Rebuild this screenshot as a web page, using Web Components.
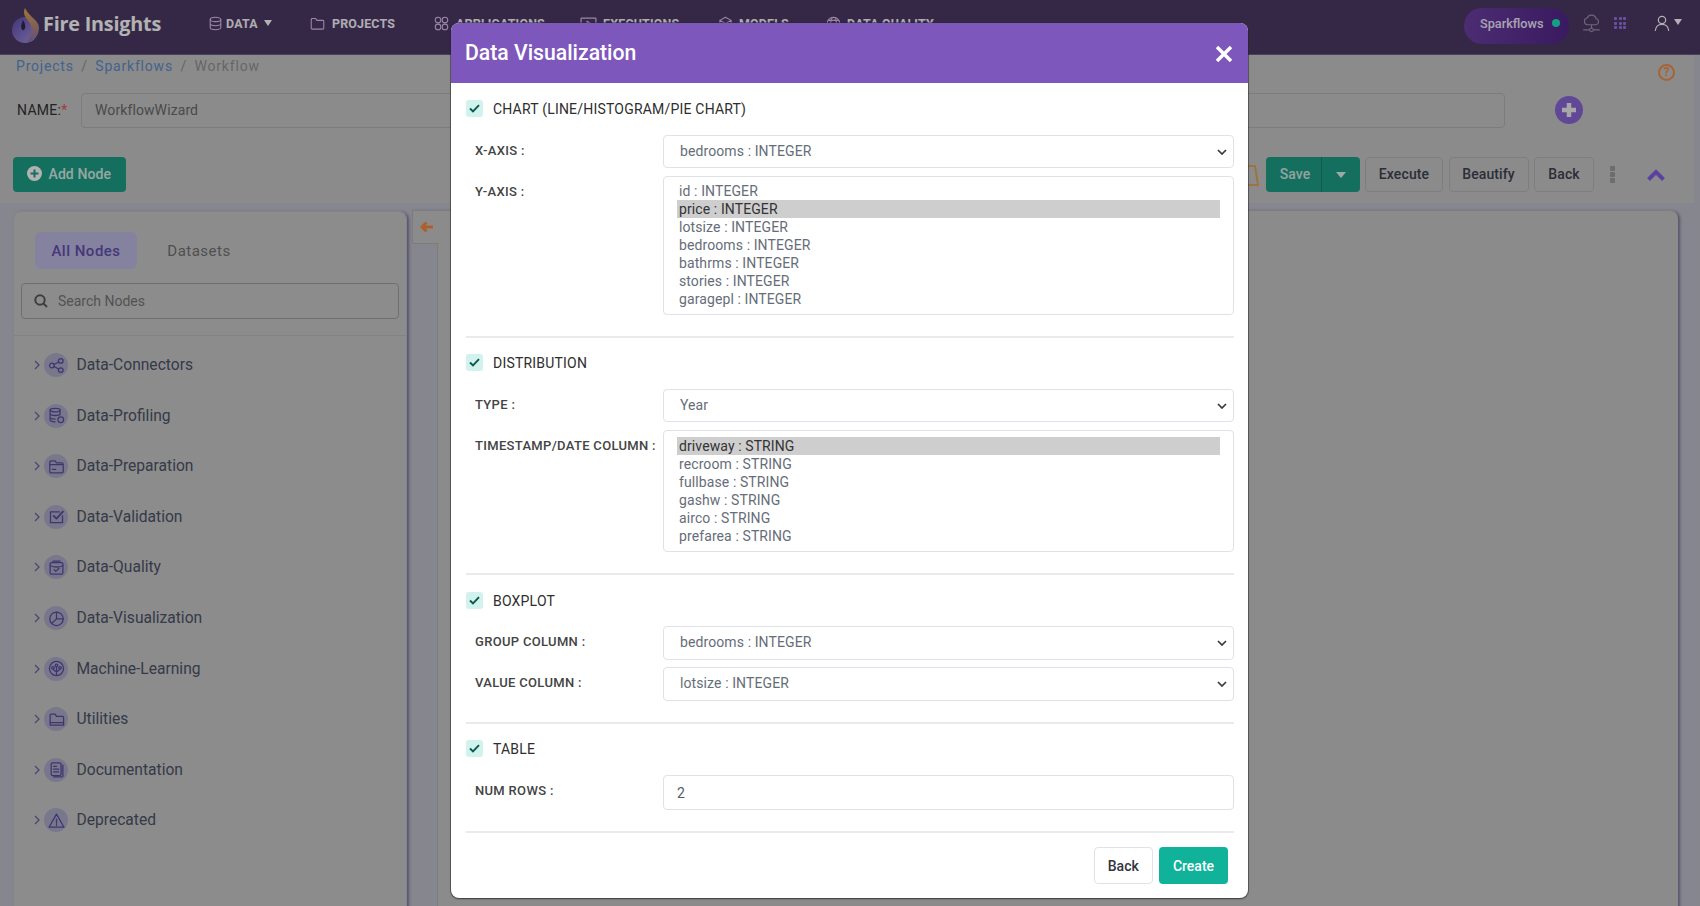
<!DOCTYPE html>
<html lang="en"><head><meta charset="utf-8"><title>Data Visualization</title>
<style>
html,body{margin:0;height:100%;overflow:hidden}
body{font-family:Roboto,"Liberation Sans",sans-serif;font-size:14px;background:#c1c0cc}
</style></head><body>
<fi-app>
  <fi-navbar slot="nav">
    <fi-nav-item w="102" gap="3" icon="db" caret>DATA</fi-nav-item>
    <fi-nav-item w="124" gap="7" icon="folder">PROJECTS</fi-nav-item>
    <fi-nav-item w="146" gap="7" icon="apps">APPLICATIONS</fi-nav-item>
    <fi-nav-item w="138" gap="6" size="17" icon="exec">EXECUTIONS</fi-nav-item>
    <fi-nav-item w="108" gap="6" icon="model">MODELS</fi-nav-item>
    <fi-nav-item w="120" gap="6" icon="globe">DATA QUALITY</fi-nav-item>
  </fi-navbar>
  <fi-workflow-head slot="head"></fi-workflow-head>
  <fi-node-panel slot="panel">
    <fi-node-row icon="share">Data-Connectors</fi-node-row>
    <fi-node-row icon="profile">Data-Profiling</fi-node-row>
    <fi-node-row icon="prep">Data-Preparation</fi-node-row>
    <fi-node-row icon="valid">Data-Validation</fi-node-row>
    <fi-node-row icon="quality">Data-Quality</fi-node-row>
    <fi-node-row icon="pie">Data-Visualization</fi-node-row>
    <fi-node-row icon="ml">Machine-Learning</fi-node-row>
    <fi-node-row icon="util">Utilities</fi-node-row>
    <fi-node-row icon="doc">Documentation</fi-node-row>
    <fi-node-row icon="warn">Deprecated</fi-node-row>
  </fi-node-panel>
  <fi-canvas slot="canvas"></fi-canvas>
  <fi-modal slot="modal" heading="Data Visualization">
    <fi-section label="CHART (LINE/HISTOGRAM/PIE CHART)" first>
      <fi-field label="X-AXIS :"><fi-select>bedrooms : INTEGER</fi-select></fi-field>
      <fi-field label="Y-AXIS :"><fi-listbox selected="1" options="id : INTEGER|price : INTEGER|lotsize : INTEGER|bedrooms : INTEGER|bathrms : INTEGER|stories : INTEGER|garagepl : INTEGER"></fi-listbox></fi-field>
    </fi-section>
    <fi-section label="DISTRIBUTION">
      <fi-field label="TYPE :"><fi-select>Year</fi-select></fi-field>
      <fi-field label="TIMESTAMP/DATE COLUMN :"><fi-listbox style="padding-top:6px" selected="0" options="driveway : STRING|recroom : STRING|fullbase : STRING|gashw : STRING|airco : STRING|prefarea : STRING"></fi-listbox></fi-field>
    </fi-section>
    <fi-section label="BOXPLOT" tight first>
      <fi-field label="GROUP COLUMN :"><fi-select tall>bedrooms : INTEGER</fi-select></fi-field>
      <fi-field label="VALUE COLUMN :"><fi-select tall>lotsize : INTEGER</fi-select></fi-field>
    </fi-section>
    <fi-section label="TABLE">
      <fi-field label="NUM ROWS :"><fi-textbox>2</fi-textbox></fi-field>
    </fi-section>
    <fi-modal-footer></fi-modal-footer>
  </fi-modal>
</fi-app>
<script>
const IC={
db:'<ellipse cx="12" cy="5.5" rx="8.5" ry="3.5"/><path d="M3.5 5.5v13c0 2 3.8 3.5 8.5 3.5s8.500-1.500 8.500-3.500v-13M3.500 12c0 2 3.800 3.500 8.500 3.500s8.500-1.500 8.500-3.500"/>',
folder:'<path d="M2 5.500a1.500 1.500 0 0 1 1.500-1.500H9l2 3h9.500A1.500 1.500 0 0 1 22 8.500v11a1.500 1.500 0 0 1-1.500 1.500h-17A1.500 1.500 0 0 1 2 19.500z"/>',
apps:'<circle cx="6.500" cy="6.500" r="4.500"/><circle cx="17.500" cy="6.500" r="4.500"/><circle cx="6.500" cy="17.500" r="4.500"/><circle cx="17.500" cy="17.500" r="4.500"/>',
exec:'<rect x="1.500" y="3" width="21" height="15" rx="1"/><path d="M10 7.500l5 3-5 3zM7 21.500h10"/>',
model:'<path d="M12 2l9 5v10l-9 5-9-5V7zM3 7l9 5 9-5M12 12v10"/>',
globe:'<circle cx="12" cy="12" r="10"/><ellipse cx="12" cy="12" rx="4.500" ry="10"/><path d="M2 12h20M3.500 7h17M3.500 17h17"/>',
cloud:'<path d="M7 13.500a4.300 4.300 0 0 1-.5-8.500 6 6 0 0 1 11.300 1 3.800 3.800 0 0 1-.3 7.500zM12 13.500V18M2 20h7.500M14.500 20H22"/><circle cx="12" cy="20" r="2.300"/>',
user:'<circle cx="12" cy="7.500" r="5.500"/><path d="M2 23c.8-6 4.800-9 10-9s9.200 3 10 9"/>',
share:'<circle cx="5.500" cy="12" r="3.300"/><circle cx="18" cy="5.500" r="3.300"/><circle cx="18" cy="18.500" r="3.300"/><path d="M8.500 10.500l6.500-3.500M8.500 13.500l6.500 3.500"/>',
profile:'<ellipse cx="10" cy="4.500" rx="7" ry="2.500"/><path d="M3 4.500v14c0 1.500 3 2.500 7 2.500M17 4.500V11M3 9.500c0 1.500 3 2.500 7 2.500s7-1 7-2.500M3 14.500c0 1.500 3 2.500 7 2.500"/><circle cx="18" cy="18" r="4"/>',
prep:'<path d="M2.500 6a2 2 0 0 1 2-2H10l2 3h7.500a2 2 0 0 1 2 2v10a2 2 0 0 1-2 2h-15a2 2 0 0 1-2-2zM2.500 9.500h19M6 16h5"/>',
valid:'<path d="M20.500 11v9.500h-17v-15H16"/><path d="M8 11l4 4 9-10" stroke-width="2.600"/>',
quality:'<rect x="3" y="5" width="18" height="16.500" rx="2"/><path d="M3 9.500c5 2 13 2 18 0M7 3h10M8.500 15l2.500 2.500 4.500-4.500"/>',
pie:'<circle cx="12" cy="12.500" r="9.500"/><path d="M12 3v9.500h9.500M12 12.500l-7 6.500"/>',
ml:'<circle cx="12" cy="12" r="10"/><circle cx="12" cy="7.500" r="1.800"/><circle cx="7" cy="11" r="1.800"/><circle cx="17" cy="11" r="1.800"/><path d="M12 9.500V21M7.500 13c1 2 3 3 4.500 3.500M16.500 13c-1 2-3 3-4.500 3.500"/>',
util:'<path d="M3 6a1.500 1.500 0 0 1 1.500-1.500H10l2 3h8.500A1.500 1.500 0 0 1 22 9v11H3zM3 16.500h19"/>',
doc:'<rect x="4.500" y="2.500" width="14" height="18" rx="2"/><path d="M21 6v15a1.500 1.500 0 0 1-1.500 1.500H8M8 7.500h4M8 11.500h7M8 15.500h7"/>',
warn:'<path d="M12 3l10.500 18.500h-21zM12 10v6M12 18v1"/>'
};
function svg(name,size,color,sw){return `<svg width="${size}" height="${size}" viewBox="0 0 24 24" fill="none" stroke="${color}" stroke-width="${sw||1.8}" stroke-linecap="round" stroke-linejoin="round" aria-hidden="true">${IC[name]}</svg>`}
function el(name,css,html,setup){
  customElements.define(name,class extends HTMLElement{
    connectedCallback(){
      if(this.shadowRoot)return;
      const r=this.attachShadow({mode:'open'});
      const h=typeof html==='function'?html(this):html;
      r.innerHTML=`<style>${css}</style>${h}`;
      if(setup)setup(this,r);
    }
  });
}
el('fi-app',`
:host{display:block;position:relative;width:1700px;height:906px;overflow:hidden;background:#c1c0cc}
.lower{display:flex;padding:8px 0 0 13px;height:703px;box-sizing:border-box}
`,`<slot name="nav"></slot><slot name="head"></slot><div class="lower"><slot name="panel"></slot><slot name="canvas"></slot></div><slot name="modal"></slot>`);

el('fi-navbar',`
:host{display:flex;align-items:flex-start;height:55px;box-sizing:border-box;background:#4c3a66;padding-left:10px;border-bottom:1px solid #6b5f80}
.brand{display:flex;align-items:flex-start;width:198px;flex:none}
.brand svg{margin-top:6px;display:block}
.name{font:700 19.800px/1 "Open Sans","Liberation Sans",sans-serif;color:#fff;margin:14px 0 0 1px;letter-spacing:-.2px;white-space:nowrap}
.right{margin-left:auto;display:flex;align-items:flex-start;padding:8px 18px 0 0}
.pill{width:105px;height:36px;border-radius:18px;background:linear-gradient(90deg,#6d40a4,#532589);display:flex;align-items:center;box-sizing:border-box;padding:0 0 6px 16px;color:#f0eaff;font-weight:500;font-size:12.700px}
.dot{width:8px;height:8px;border-radius:50%;background:#1ce5be;margin-left:9px}
.ic{display:block}
.cloud{margin:6px 0 0 13px}.grid{margin:9px 0 0 13px;display:grid;grid-template-columns:repeat(3,3px);gap:1.500px}.grid i{width:3px;height:3px;background:#9971e9;border-radius:1px;display:block}
.user{margin:7px 0 0 28px}
.car{width:0;height:0;border:4.500px solid transparent;border-top:6px solid #fff;border-bottom:0;margin:11px 0 0 4px}
`,`<div class="brand"><svg width="32" height="38" viewBox="8 5 32 38" aria-label="Fire Insights logo"><defs><linearGradient id="g1" x1="0" y1="0" x2="1" y2="1"><stop offset="0" stop-color="#5e4cb0"/><stop offset="1" stop-color="#a698e0"/></linearGradient><linearGradient id="g2" x1="0" y1="0" x2="0" y2="1"><stop offset="0" stop-color="#e8a94a"/><stop offset="1" stop-color="#8c6fb0"/></linearGradient></defs><circle cx="23" cy="29" r="13" fill="url(#g1)"/><path d="M23 7C20 13 24 17 27 21C31 26 30 34 25 41.500C32 40 37 34 37 27C37 19 27 16 23 7Z" fill="url(#g2)"/><path d="M21 19C19 24 18 27 21 29.500C24 28 24 24 21 19Z" fill="#33274a"/></svg><span class="name">Fire Insights</span></div><slot></slot>
<div class="right"><div class="pill">Sparkflows<span class="dot"></span></div><span class="ic cloud">${svg('cloud',19,'#9d92ac',1.4)}</span><span class="ic grid">${'<i></i>'.repeat(9)}</span><span class="ic user">${svg('user',16,'#fff',1.8)}</span><span class="car"></span></div>`);

el('fi-nav-item',`
:host{display:flex;flex:none;align-items:flex-start;padding-top:16px;box-sizing:border-box;font-weight:700;font-size:12.400px;color:#fbf6ff;white-space:nowrap;letter-spacing:.2px}
svg{display:block}
.t{line-height:16px}
.car{width:0;height:0;border:4.500px solid transparent;border-top:6px solid #fff;border-bottom:0;margin:4px 0 0 6px}
`,h=>`${svg(h.getAttribute('icon'),h.getAttribute('size')||15,'#e0c1ec',1.7)}<span class="t" style="margin-left:${h.getAttribute('gap')}px"><slot></slot></span>${h.hasAttribute('caret')?'<span class="car"></span>':''}`,(h)=>{h.style.width=h.getAttribute('w')+'px'});

el('fi-workflow-head',`
:host{display:block;background:#c8c8c8;height:148px;width:1694px;box-sizing:border-box;padding-left:16px;position:relative}
.crumb{display:flex;height:21px;align-items:center;justify-content:space-between;letter-spacing:.8px;color:#929292}
.crumb a{color:#5f8ec8;text-decoration:none}.crumb i{font-style:normal;margin:0 7.500px}
.help{width:17px;height:17px;box-sizing:border-box;border:2px solid #f08e4e;border-radius:50%;color:#f08e4e;font:700 12px/13px Roboto,sans-serif;text-align:center;margin:13px 19px 0 0;letter-spacing:0;flex:none}
.name{display:flex;align-items:center;margin-top:17px;height:35px;padding-left:1px}
label{color:#333;width:64px;flex:none;letter-spacing:.3px;margin-bottom:2px}label b{color:#e55656;font-weight:400}
.inp{width:1424px;box-sizing:border-box;height:35px;border:1px solid #b2b2b2;border-radius:4px;padding-left:13px;line-height:33px;color:#6a6a6a;flex:none;letter-spacing:.1px}
.plus{margin:0 0 2px 50px;display:block}
.acts{display:flex;align-items:center;margin:29px 0 0 -3px;height:35px;letter-spacing:.1px}
.sp{flex:1}
.add{display:flex;align-items:center;width:113px;height:35px;box-sizing:border-box;background:#1da088;border-radius:4px;color:#dcefea;font-weight:500;padding:0 0 2px 14px}
.add svg{margin:0 6.500px 0 0}
.save{display:flex;width:94px;height:35px;background:#1da088;border-radius:4px;color:#d5eae4;font-weight:500;margin-left:7px}
.save span{width:56px;display:flex;align-items:center;justify-content:center;border-right:1px solid #178671;box-sizing:border-box;padding:0 0 2px 4px}
.save em{flex:1;display:flex;align-items:center;justify-content:center}
.save em::after{content:"";border:5px solid transparent;border-top:6px solid #e6f2ef;border-bottom:0}
.btn{height:35px;box-sizing:border-box;border:1px solid #b5b5b5;border-radius:4px;display:flex;align-items:center;justify-content:center;color:#3e4250;font-weight:500;margin-left:5.500px;padding-bottom:2px}
.keb{display:grid;gap:1px;margin:0 0 0 16px;width:5px}.keb i{display:block;width:5px;height:5px;background:#9d9d9d;border-radius:1px}
.up{margin:0 29px 0 32px;display:block}
.book{margin-right:0;display:block}
`,`<div class="crumb"><span><a>Projects</a><i>/</i><a>Sparkflows</a><i>/</i>Workflow</span><span class="help">?</span></div>
<div class="name"><label>NAME:<b>*</b></label><div class="inp">WorkflowWizard</div><svg class="plus" width="28" height="28" viewBox="0 0 28 28"><circle cx="14" cy="14" r="14" fill="#8c68d8"/><path d="M14 7v14M7 14h14" stroke="#f0f0f0" stroke-width="4.500"/></svg></div>
<div class="acts"><div class="add"><svg width="15" height="15" viewBox="0 0 15 15"><circle cx="7.500" cy="7.500" r="7.500" fill="#fff"/><path d="M7.500 3.500v8M3.500 7.500h8" stroke="#1da088" stroke-width="2"/></svg>Add Node</div><div class="sp"></div>
<svg class="book" width="24" height="24" viewBox="0 0 24 24" fill="none" stroke="#dfa65c" stroke-width="2"><path d="M6 3h14l3 19H9zM9 22V7"/></svg>
<div class="save"><span>Save</span><em></em></div><div class="btn" style="width:78px">Execute</div><div class="btn" style="width:80px">Beautify</div><div class="btn" style="width:60px">Back</div>
<div class="keb"><i></i><i></i><i></i></div><svg class="up" width="18" height="12" viewBox="0 0 18 12" fill="none" stroke="#835fe5" stroke-width="4"><path d="M1.500 10.500L9 3l7.500 7.500"/></svg></div>`);

el('fi-node-panel',`
:host{display:block;flex:none;width:394px;height:720px;box-sizing:border-box;background:#c9c9c9;border-radius:8px 8px 0 0;border:1px solid #bdbdc6;border-bottom:0;box-shadow:2px 1px 3px #7a7799;padding-top:20px}
.tabs{display:flex;padding-left:21px;height:37px;letter-spacing:.5px;font-size:15px}
.tab{display:flex;align-items:center;justify-content:center;border-radius:6px;height:37px;width:102px;color:#6450ae;background:#bebae3;font-weight:500}
.tab.o{background:none;color:#727272;font-weight:400;margin-left:10px;width:104px}
.search{margin:14px 7px 0;height:36px;box-sizing:border-box;border:1px solid #a0a0a0;border-radius:4px;display:flex;align-items:center;padding-left:12px;color:#767676}
.search svg{margin-right:10px}
.div{margin-top:16px;border-top:1px solid #bcbcbc}
.rows{display:grid;grid-auto-rows:50.550px;padding-top:4px}
`,`<div class="tabs"><div class="tab">All Nodes</div><div class="tab o">Datasets</div></div>
<div class="search"><svg width="14" height="14" viewBox="0 0 14 14" fill="none" stroke="#5a5a5a" stroke-width="2"><circle cx="6" cy="6" r="4.700"/><path d="M9.500 9.500L13 13"/></svg>Search Nodes</div><div class="div"></div><div class="rows"><slot></slot></div>`);

el('fi-node-row',`
:host{display:flex;align-items:center;font-size:15.600px;color:#4d5368;padding-left:20px}
.ch{display:block;margin-right:4px}
.c{width:24px;height:24px;border-radius:50%;background:#aeabc8;display:flex;align-items:center;justify-content:center;margin-right:8.500px;flex:none}
`,h=>`<svg class="ch" width="6" height="10" viewBox="0 0 6 10" fill="none" stroke="#71639f" stroke-width="1.300"><path d="M1 1l4 4-4 4"/></svg><span class="c">${svg(h.getAttribute('icon'),17,'#5a4da0',1.800)}</span><slot></slot>`);

el('fi-canvas',`
:host{display:flex;flex:none;width:1266px;height:720px;margin:-1px 0 0 5px;background:#c8c8c8;box-shadow:2px 1px 3px #7a7799;border-top:1px solid #b2b2b2;border-radius:0 8px 0 0;box-sizing:border-box}
.col{width:26px;flex:none;background:#c1c0cc;border-right:1px solid #b2b2b2;box-sizing:border-box}
.arr{height:33px;background:#c8c8c8;border:1px solid #b2b2b2;border-top:0;border-right:0;width:27px;box-sizing:border-box;display:flex;align-items:center;justify-content:center;border-bottom:1px solid #b2b2b2}
`,`<div class="col"><div class="arr"><svg width="13" height="12" viewBox="0 0 13 12" fill="none" stroke="#fb8943" stroke-width="3"><path d="M6.500 1.500L2 6l4.500 4.500M2.500 6H13"/></svg></div></div>`);

el('fi-modal',`
:host{position:absolute;inset:0;display:block;background:rgba(0,0,0,.3);z-index:10}
.box{position:absolute;left:451px;top:23px;width:797px;height:875px;background:#fff;border-radius:8px;box-shadow:0 0 0 1px rgba(40,40,40,.45),0 1px 2px rgba(0,0,0,.4);overflow:hidden}
.hd{height:60px;background:#7e57bc;display:flex;align-items:center;justify-content:space-between;padding:0 16px 2px 14px;color:#fff;font-size:21.200px;font-weight:500;box-sizing:border-box}
.hd svg{display:block;margin-top:3px}
.bd{padding:0 14px 0 15px}
`,h=>`<div class="box"><div class="hd"><span>${h.getAttribute('heading')}</span><svg width="16" height="16" viewBox="0 0 16 16" stroke="#fff" stroke-width="3.400"><path d="M1 1l14 14M15 1L1 15"/></svg></div><div class="bd"><slot></slot></div></div>`);

el('fi-section',`
:host{display:block;padding:16px 0 21px;border-bottom:2px solid #e9eaee}
:host([first]){padding-top:17px}
.hd{display:flex;align-items:center;height:17px;margin-bottom:18px;color:#2e2e2e;font-weight:400;font-size:14px;letter-spacing:.2px}
:host([tight]) .hd{margin-bottom:17px}
.cb{width:17px;height:17px;border-radius:3px;background:#d1f2ed;display:flex;align-items:center;justify-content:center;margin-right:10px}
.fields{display:grid;gap:8px}
:host([tight]) .fields{gap:7px}
`,h=>`<div class="hd"><span class="cb"><svg width="11" height="9" viewBox="0 0 11 9" fill="none" stroke="#0b5a4e" stroke-width="1.900"><path d="M1 4.500l3 3L10 1.200"/></svg></span>${h.getAttribute('label')}</div><div class="fields"><slot></slot></div>`);

el('fi-field',`
:host{display:flex;align-items:flex-start;padding-left:9px}
label{width:188px;flex:none;font-size:13px;font-weight:500;color:#444;line-height:16px;padding-top:7.500px;white-space:nowrap;letter-spacing:.32px}
.c{flex:1;min-width:0}
`,h=>`<label>${h.getAttribute('label')}</label><div class="c"><slot></slot></div>`);

el('fi-select',`
:host{display:flex;align-items:center;justify-content:space-between;height:33px;box-sizing:border-box;border:1px solid #dfe2e8;border-radius:4px;padding:0 6px 2px 16px;color:#666d78;font-size:14px;background:#fff;letter-spacing:.1px}
:host([tall]){height:34px}
svg{display:block;margin-top:2px}
`,`<slot></slot><svg width="10" height="6" viewBox="0 0 10 6" fill="none" stroke="#343a40" stroke-width="1.700"><path d="M1 1l4 4 4-4"/></svg>`);

el('fi-listbox',`
:host{display:block;box-sizing:border-box;border:1px solid #dfe2e8;border-radius:4px;padding:5px 13px 6px;color:#666d78;font-size:14px;letter-spacing:.1px}
div{height:18px;line-height:18px;padding-left:2px;white-space:nowrap}
.s{background:#cecece;color:#333}
`,h=>h.getAttribute('options').split('|').map((o,i)=>`<div class="${i==h.getAttribute('selected')?'s':''}">${o}</div>`).join(''));

el('fi-textbox',`
:host{display:flex;align-items:center;height:35px;box-sizing:border-box;border:1px solid #dfe2e8;border-radius:4px;padding-left:13px;color:#555c66;font-size:14px}
`,`<slot></slot>`);

el('fi-modal-footer',`
:host{display:flex;justify-content:flex-end;gap:6px;padding:14px 6px 0 0}
.b{height:37px;box-sizing:border-box;border-radius:4px;display:flex;align-items:center;justify-content:center;font-weight:500;font-size:14px}
.back{width:59.500px;border:1px solid #dfe2e8;color:#33363f}
.create{width:69px;background:#10b399;color:#fff}
`,`<div class="b back">Back</div><div class="b create">Create</div>`);
</script>
</body></html>
